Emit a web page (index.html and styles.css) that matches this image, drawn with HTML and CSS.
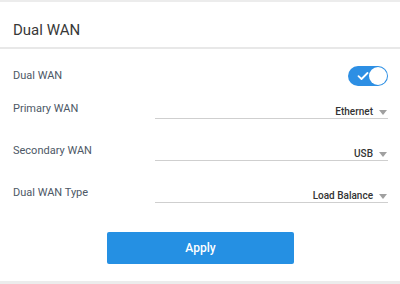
FILE: index.html
```html
<!DOCTYPE html>
<html lang="en">

<head>
    <meta charset="UTF-8">
    <meta name="viewport" content="width=device-width, initial-scale=1.0">
    <title>Dual WAN</title>
    <link rel="stylesheet" href="styles.css">
</head>

<body>
    <div class="card">
        <h1 class="cardTitle">Dual WAN</h1>

        <div class="cardBody">
            <div class="row toggleRow">
                <span class="label">Dual WAN</span>
                <span class="toggle">
                    <svg class="check" width="12" height="10" viewBox="0 0 12 10">
                        <path d="M1.5 5.2 L4.5 8 L10.5 2" fill="none" stroke="white" stroke-width="1.8" stroke-linecap="round" stroke-linejoin="round"/>
                    </svg>
                    <span class="knob"></span>
                </span>
            </div>

            <div class="row">
                <span class="label">Primary WAN</span>
                <div class="select"><span class="value">Ethernet</span><span class="arrow"></span></div>
            </div>

            <div class="row">
                <span class="label">Secondary WAN</span>
                <div class="select"><span class="value">USB</span><span class="arrow"></span></div>
            </div>

            <div class="row">
                <span class="label">Dual WAN Type</span>
                <div class="select"><span class="value">Load Balance</span><span class="arrow"></span></div>
            </div>

            <div class="actions">
                <button class="applyBtn">Apply</button>
            </div>
        </div>
    </div>
</body>

</html>
```

FILE: styles.css
```css
* {
    margin: 0;
    box-sizing: border-box;
}

body {
    background-color: #ececec;
    font-family: Roboto, "Liberation Sans", sans-serif;
    color: #333;
    padding-top: 2px;
}

.card {
    background-color: white;
    height: 279px;
}

.cardTitle {
    font-size: 15px;
    font-weight: 400;
    color: #383838;
    padding: 19px 13px 0;
    height: 47px;
    border-bottom: 2px solid #e8e8e8;
    line-height: 18px;
}

.cardBody {
    padding: 0 12px 0 13px;
}

.row {
    display: flex;
    align-items: flex-start;
    height: 42px;
}

.toggleRow {
    align-items: center;
    height: 53px;
}

.label {
    width: 142px;
    font-size: 11px;
    line-height: 14px;
    color: #4d5866;
}

.toggleRow .label {
    flex: 1;
}

.toggle {
    width: 40px;
    height: 20px;
    border-radius: 10px;
    background-color: #2d8fe4;
    display: flex;
    align-items: center;
    justify-content: space-between;
    padding: 0 1px 0 9px;
}

.knob {
    width: 18px;
    height: 18px;
    border-radius: 50%;
    background-color: white;
}

.select {
    flex: 1;
    margin-top: 4px;
    display: flex;
    justify-content: flex-end;
    align-items: center;
    border-bottom: 1px solid #cfcfcf;
    height: 13px;
}

.value {
    font-size: 10px;
    font-weight: 500;
    line-height: 12px;
    color: #333;
}

.arrow {
    margin: 0 1px 0 6px;
    width: 0;
    height: 0;
    border-left: 4px solid transparent;
    border-right: 4px solid transparent;
    border-top: 5px solid #a0a0a0;
}

.actions {
    display: flex;
    justify-content: center;
    padding-top: 4px;
}

.applyBtn {
    all: unset;
    width: 187px;
    height: 32px;
    border-radius: 2px;
    background-color: #2590e3;
    color: white;
    font-family: Roboto, "Liberation Sans", sans-serif;
    font-size: 12px;
    font-weight: 500;
    text-align: center;
    line-height: 32px;
    cursor: pointer;
}
```
